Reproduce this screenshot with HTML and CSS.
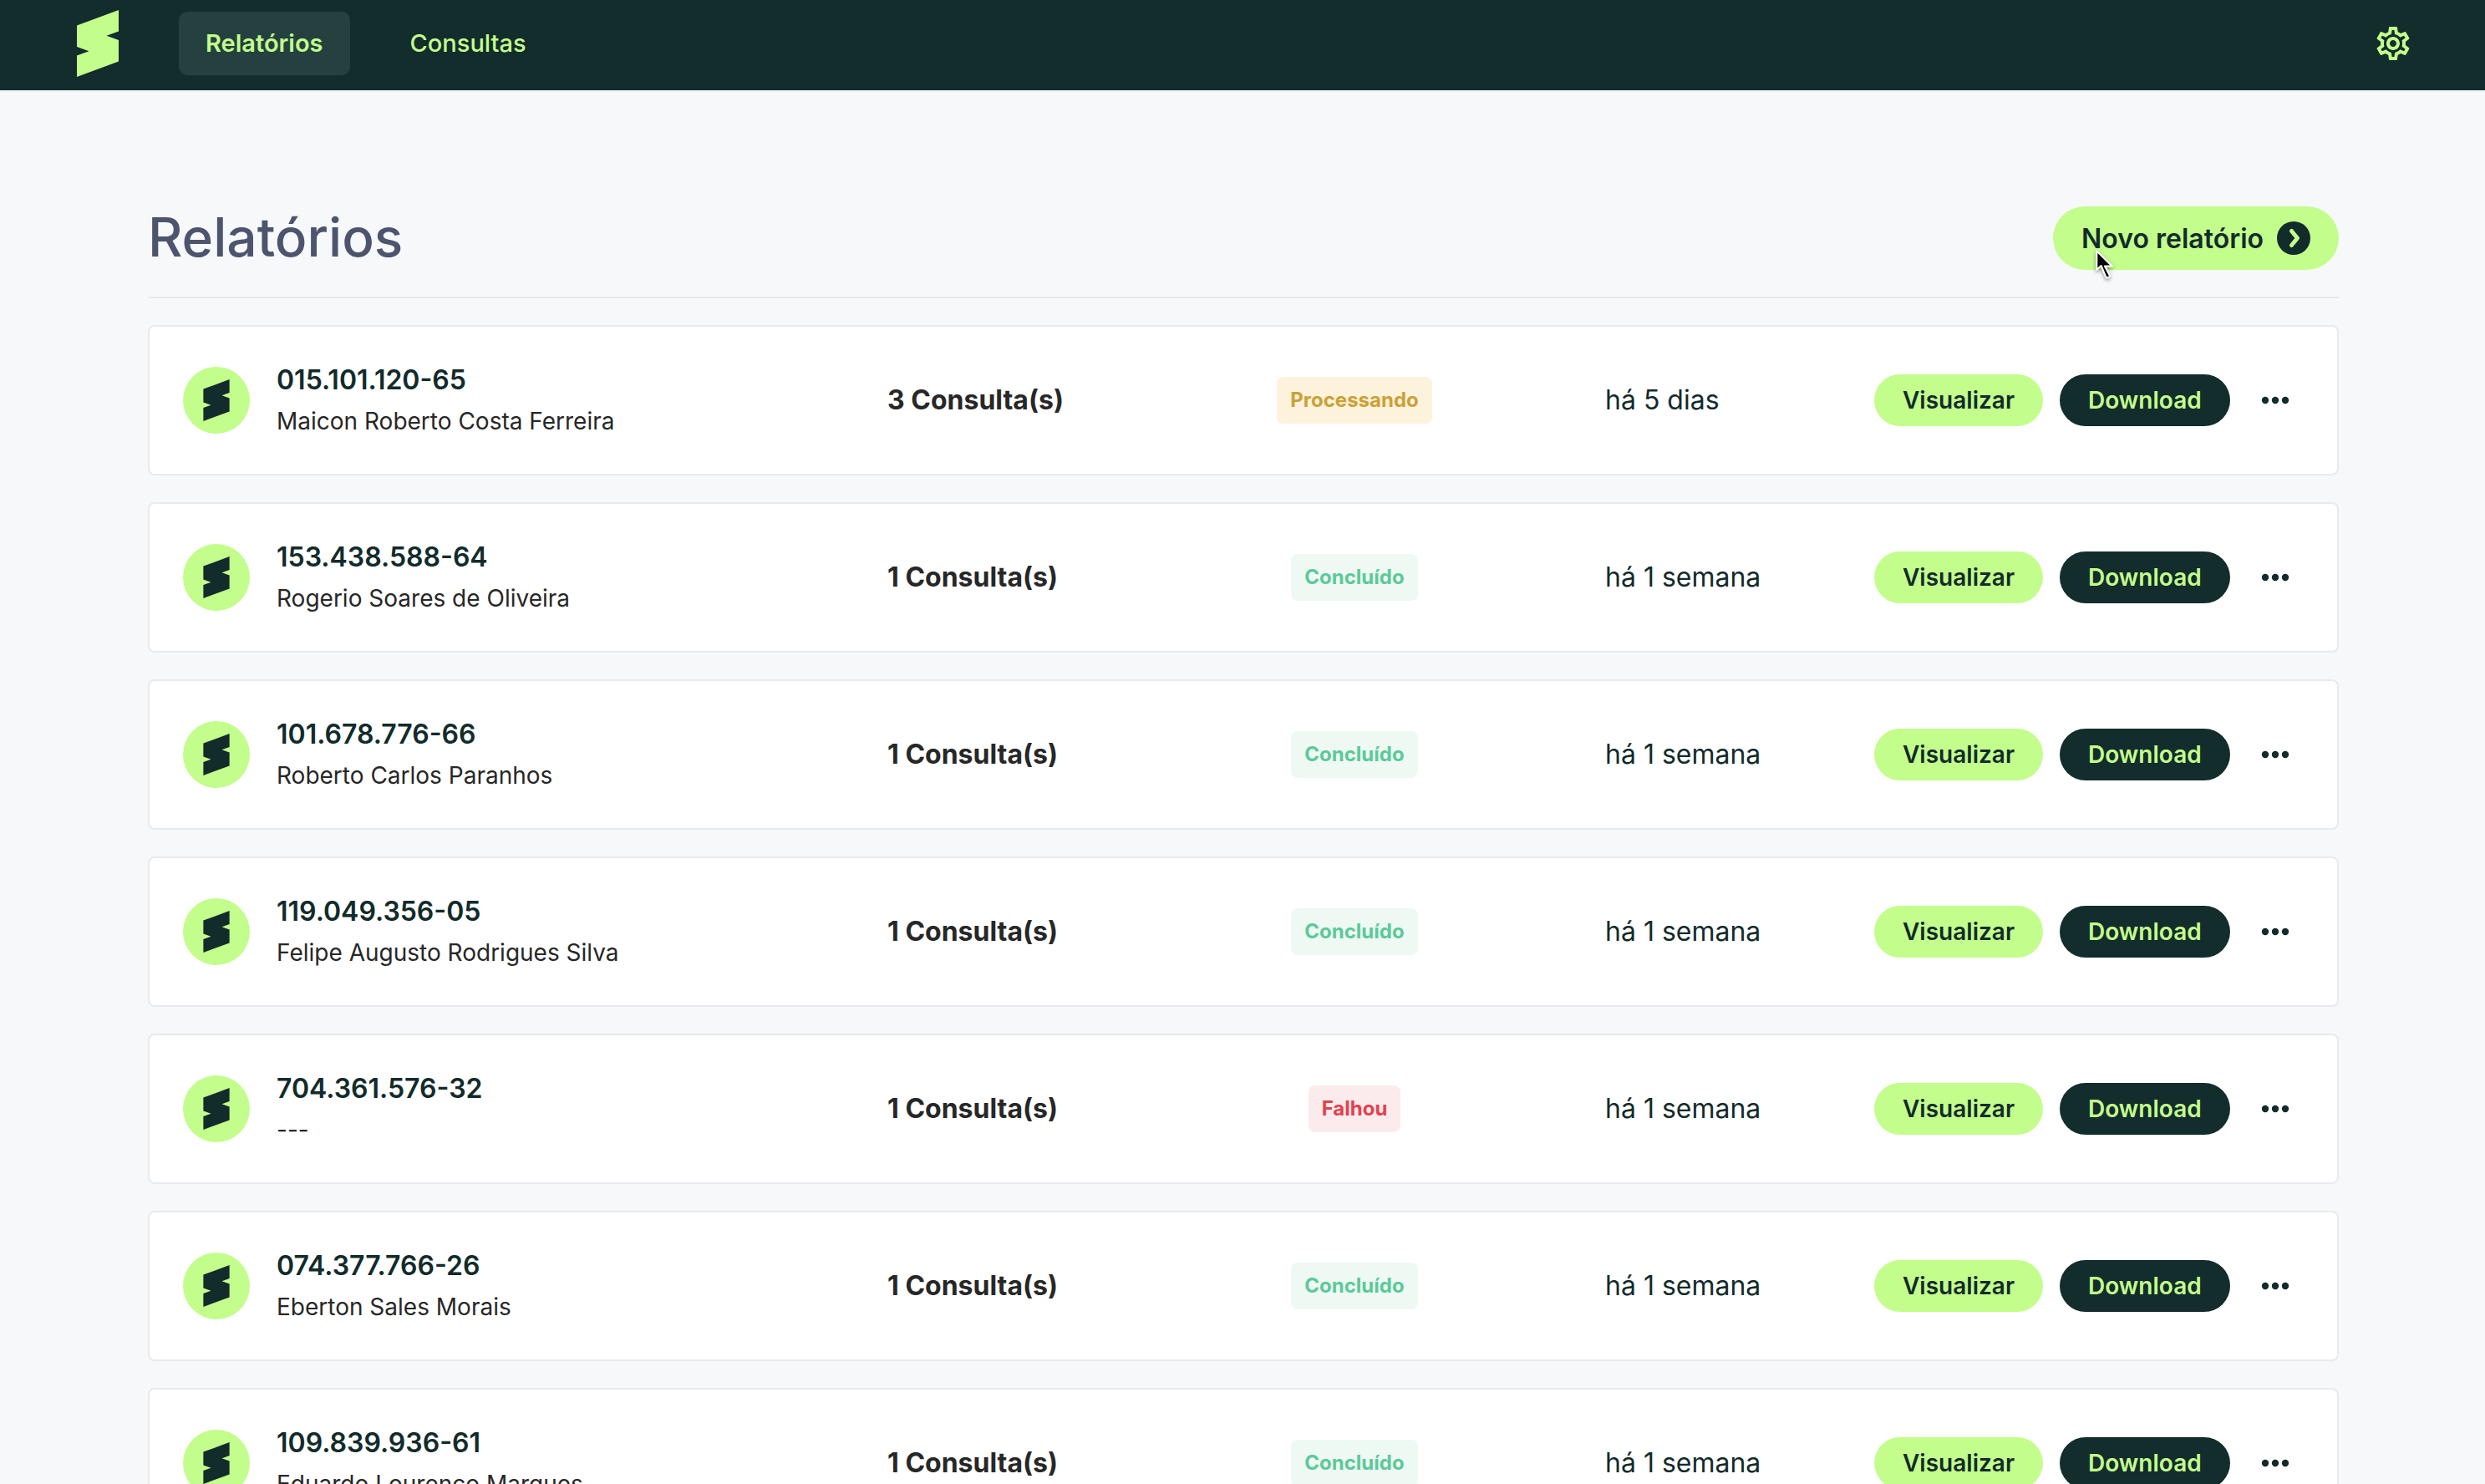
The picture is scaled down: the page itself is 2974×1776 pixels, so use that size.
FILE: index.html
```html
<!DOCTYPE html>
<html lang="pt-BR">
  <head>
    <meta charset="utf-8" />
    <title>Relatórios</title>
    <meta name="viewport" content="width=device-width, initial-scale=1" />
    <link rel="stylesheet" href="styles.css" />
  </head>
  <body>
    <svg class="sprite" aria-hidden="true">
      <symbol id="logo" viewBox="0 0 50 80">
        <path d="M50 0 0 18.5V44l14.5 5.2L0 54.5V80l50-18.5V36l-14.5-5.2L50 25.5Z" />
      </symbol>
      <symbol id="dots" viewBox="0 0 36 36">
        <circle cx="6" cy="18" r="4.2" />
        <circle cx="18" cy="18" r="4.2" />
        <circle cx="30" cy="18" r="4.2" />
      </symbol>
    </svg>

    <header class="topbar">
      <a href="#" class="logo" aria-label="Início"><svg><use href="#logo" /></svg></a>
      <nav class="menu">
        <a href="#" class="menu-link active">Relatórios</a>
        <a href="#" class="menu-link">Consultas</a>
      </nav>
      <button type="button" class="settings" aria-label="Configurações">
        <svg viewBox="0 0 24 24">
          <path d="M19.43 12.98c.04-.32.07-.64.07-.98 0-.34-.03-.66-.07-.98l2.11-1.65c.19-.15.24-.42.12-.64l-2-3.46c-.09-.16-.26-.25-.44-.25-.06 0-.12.01-.17.03l-2.49 1c-.52-.4-1.08-.73-1.69-.98l-.38-2.65C14.46 2.18 14.25 2 14 2h-4c-.25 0-.46.18-.49.42l-.38 2.65c-.61.25-1.17.59-1.69.98l-2.49-1c-.06-.02-.12-.03-.18-.03-.17 0-.34.09-.43.25l-2 3.46c-.13.22-.07.49.12.64l2.11 1.65c-.04.32-.07.65-.07.98 0 .33.03.66.07.98l-2.11 1.65c-.19.15-.24.42-.12.64l2 3.46c.09.16.26.25.44.25.06 0 .12-.01.17-.03l2.49-1c.52.4 1.08.73 1.69.98l.38 2.65c.03.24.24.42.49.42h4c.25 0 .46-.18.49-.42l.38-2.65c.61-.25 1.17-.59 1.69-.98l2.49 1c.06.02.12.03.18.03.17 0 .34-.09.43-.25l2-3.46c.12-.22.07-.49-.12-.64l-2.11-1.65zm-1.98-1.71c.04.31.05.52.05.73 0 .21-.02.43-.05.73l-.14 1.13.89.7 1.08.84-.7 1.21-1.27-.51-1.04-.42-.9.68c-.43.32-.84.56-1.25.73l-1.06.43-.16 1.13-.2 1.35h-1.4l-.19-1.35-.16-1.13-1.06-.43c-.43-.18-.83-.41-1.23-.71l-.91-.7-1.06.43-1.27.51-.7-1.21 1.08-.84.89-.7-.14-1.13c-.03-.31-.05-.54-.05-.74s.02-.43.05-.73l.14-1.13-.89-.7-1.08-.84.7-1.21 1.27.51 1.04.42.9-.68c.43-.32.84-.56 1.25-.73l1.06-.43.16-1.13.2-1.35h1.39l.19 1.35.16 1.13 1.06.43c.43.18.83.41 1.23.71l.91.7 1.06-.43 1.27-.51.7 1.21-1.07.85-.89.7.14 1.13zM12 8c-2.21 0-4 1.79-4 4s1.79 4 4 4 4-1.79 4-4-1.79-4-4-4zm0 6c-1.1 0-2-.9-2-2s.9-2 2-2 2 .9 2 2-.9 2-2 2z" />
        </svg>
      </button>
    </header>

    <main class="container">
      <div class="page-header">
        <h1>Relatórios</h1>
        <button type="button" class="btn-new">
          Novo relatório
          <svg class="btn-new-icon" viewBox="0 0 40 40">
            <circle cx="20" cy="20" r="20" />
            <path d="M17.5 11.500 24.500 20l-7 8.500" />
          </svg>
          <svg class="cursor" viewBox="0 0 22 36">
            <path d="M2 2v21l5-4.500 5 12q1 2 3 1t1-3l-5-9.500h8z" />
          </svg>
        </button>
      </div>

      <ul class="reports">
        <li class="report">
          <div class="person">
            <span class="avatar"><svg><use href="#logo" /></svg></span>
            <div>
              <strong class="cpf">015.101.120-65</strong>
              <p class="name">Maicon Roberto Costa Ferreira</p>
            </div>
          </div>
          <span class="count">3 Consulta(s)</span>
          <span class="badge processing">Processando</span>
          <span class="date">há 5 dias</span>
          <div class="actions">
            <button type="button" class="btn">Visualizar</button>
            <button type="button" class="btn dark">Download</button>
            <button type="button" class="more" aria-label="Mais opções"><svg><use href="#dots" /></svg></button>
          </div>
        </li>

        <li class="report">
          <div class="person">
            <span class="avatar"><svg><use href="#logo" /></svg></span>
            <div>
              <strong class="cpf">153.438.588-64</strong>
              <p class="name">Rogerio Soares de Oliveira</p>
            </div>
          </div>
          <span class="count">1 Consulta(s)</span>
          <span class="badge done">Concluído</span>
          <span class="date">há 1 semana</span>
          <div class="actions">
            <button type="button" class="btn">Visualizar</button>
            <button type="button" class="btn dark">Download</button>
            <button type="button" class="more" aria-label="Mais opções"><svg><use href="#dots" /></svg></button>
          </div>
        </li>

        <li class="report">
          <div class="person">
            <span class="avatar"><svg><use href="#logo" /></svg></span>
            <div>
              <strong class="cpf">101.678.776-66</strong>
              <p class="name">Roberto Carlos Paranhos</p>
            </div>
          </div>
          <span class="count">1 Consulta(s)</span>
          <span class="badge done">Concluído</span>
          <span class="date">há 1 semana</span>
          <div class="actions">
            <button type="button" class="btn">Visualizar</button>
            <button type="button" class="btn dark">Download</button>
            <button type="button" class="more" aria-label="Mais opções"><svg><use href="#dots" /></svg></button>
          </div>
        </li>

        <li class="report">
          <div class="person">
            <span class="avatar"><svg><use href="#logo" /></svg></span>
            <div>
              <strong class="cpf">119.049.356-05</strong>
              <p class="name">Felipe Augusto Rodrigues Silva</p>
            </div>
          </div>
          <span class="count">1 Consulta(s)</span>
          <span class="badge done">Concluído</span>
          <span class="date">há 1 semana</span>
          <div class="actions">
            <button type="button" class="btn">Visualizar</button>
            <button type="button" class="btn dark">Download</button>
            <button type="button" class="more" aria-label="Mais opções"><svg><use href="#dots" /></svg></button>
          </div>
        </li>

        <li class="report">
          <div class="person">
            <span class="avatar"><svg><use href="#logo" /></svg></span>
            <div>
              <strong class="cpf">704.361.576-32</strong>
              <p class="name">---</p>
            </div>
          </div>
          <span class="count">1 Consulta(s)</span>
          <span class="badge failed">Falhou</span>
          <span class="date">há 1 semana</span>
          <div class="actions">
            <button type="button" class="btn">Visualizar</button>
            <button type="button" class="btn dark">Download</button>
            <button type="button" class="more" aria-label="Mais opções"><svg><use href="#dots" /></svg></button>
          </div>
        </li>

        <li class="report">
          <div class="person">
            <span class="avatar"><svg><use href="#logo" /></svg></span>
            <div>
              <strong class="cpf">074.377.766-26</strong>
              <p class="name">Eberton Sales Morais</p>
            </div>
          </div>
          <span class="count">1 Consulta(s)</span>
          <span class="badge done">Concluído</span>
          <span class="date">há 1 semana</span>
          <div class="actions">
            <button type="button" class="btn">Visualizar</button>
            <button type="button" class="btn dark">Download</button>
            <button type="button" class="more" aria-label="Mais opções"><svg><use href="#dots" /></svg></button>
          </div>
        </li>

        <li class="report">
          <div class="person">
            <span class="avatar"><svg><use href="#logo" /></svg></span>
            <div>
              <strong class="cpf">109.839.936-61</strong>
              <p class="name">Eduardo Lourenço Marques</p>
            </div>
          </div>
          <span class="count">1 Consulta(s)</span>
          <span class="badge done">Concluído</span>
          <span class="date">há 1 semana</span>
          <div class="actions">
            <button type="button" class="btn">Visualizar</button>
            <button type="button" class="btn dark">Download</button>
            <button type="button" class="more" aria-label="Mais opções"><svg><use href="#dots" /></svg></button>
          </div>
        </li>
      </ul>
    </main>
  </body>
</html>
```
FILE: styles.css
```css
* {
  box-sizing: border-box;
  margin: 0;
  padding: 0;
}

body {
  height: 100vh;
  overflow: hidden;
  font-family: Inter, sans-serif;
  font-size: 32px;
  line-height: 48px;
  color: #122b2b;
  background-color: #f7f8fa;
}

button {
  font-family: inherit;
  color: inherit;
  border: none;
  background: none;
  cursor: pointer;
}

svg {
  display: block;
  fill: currentColor;
}

.sprite {
  position: absolute;
  width: 0;
  height: 0;
}

/* topo */
.topbar {
  display: flex;
  align-items: center;
  padding: 12px 86px 16px 92px;
  color: #c3fd8c;
  background-color: #132c2c;
  border-bottom: 2px solid #f0f0f0;
}

.logo {
  color: inherit;
}

.logo svg {
  width: 50px;
  height: 80px;
}

.menu {
  display: flex;
  gap: 40px;
  margin-left: 72px;
}

.menu-link {
  padding: 14px 32px;
  font-size: 29px;
  font-weight: 500;
  color: inherit;
  text-decoration: none;
  border-radius: 10px;
}

.menu-link.active {
  font-weight: 600;
  background-color: #24413f;
}

.settings {
  margin-left: auto;
}

.settings svg {
  width: 48px;
  height: 48px;
}

/* conteudo */
.container {
  padding: 137px 175px 0 177px;
}

.page-header {
  display: flex;
  justify-content: space-between;
  align-items: flex-start;
  padding-bottom: 32px;
  margin-bottom: 32px;
  border-bottom: 2px solid #e8eaed;
}

h1 {
  font-size: 64px;
  font-weight: 500;
  line-height: 74px;
  color: #4c556d;
}

.btn-new {
  position: relative;
  display: flex;
  align-items: center;
  gap: 16px;
  height: 76px;
  padding: 0 34px;
  font-size: 32px;
  font-weight: 600;
  background-color: #c3fd8c;
  border-radius: 38px;
}

.btn-new-icon {
  width: 40px;
  height: 40px;
}

.btn-new-icon path {
  fill: none;
  stroke: #c3fd8c;
  stroke-width: 5;
  stroke-linecap: round;
  stroke-linejoin: round;
}

.cursor {
  position: absolute;
  top: 51px;
  left: 50px;
  width: 24px;
  height: 39px;
  overflow: visible;
  fill: #000;
  stroke: #fff;
  stroke-width: 2;
  stroke-linejoin: round;
  filter: drop-shadow(0 2px 2px rgba(0, 0, 0, 0.4));
}

/* lista */
.reports {
  display: flex;
  flex-direction: column;
  gap: 32px;
  list-style: none;
}

.report {
  display: grid;
  grid-template-columns: 843fr 259fr 600fr 322fr 514fr;
  align-items: center;
  height: 180px;
  padding: 0 40px;
  background-color: #fff;
  border: 2px solid #e7eaee;
  border-radius: 8px;
}

.person {
  display: flex;
  align-items: center;
  gap: 32px;
}

.avatar {
  display: flex;
  justify-content: center;
  align-items: center;
  width: 80px;
  height: 80px;
  background-color: #c3fd8c;
  border-radius: 50%;
}

.avatar svg {
  width: 32px;
  height: 50px;
}

.cpf {
  display: block;
  font-weight: 600;
}

.name {
  margin-top: 1px;
  font-size: 28px;
  color: #272727;
}

.count {
  font-weight: 700;
  color: #272727;
}

.badge {
  justify-self: center;
  padding: 4px 16px;
  font-size: 24px;
  font-weight: 700;
  border-radius: 8px;
}

.badge.processing {
  color: #cba135;
  background-color: #fdf2dc;
}

.badge.done {
  color: #5cc998;
  background-color: #eef9f4;
}

.badge.failed {
  color: #e5404f;
  background-color: #fcebec;
}

.actions {
  display: flex;
  align-items: center;
  gap: 20px;
}

.btn {
  height: 62px;
  padding: 0 34px;
  font-size: 28px;
  font-weight: 600;
  background-color: #c3fd8c;
  border-radius: 31px;
}

.btn.dark {
  color: #c3fd8c;
  background-color: #132c2c;
}

.more {
  padding: 0 16px;
}

.more svg {
  width: 36px;
  height: 36px;
}
```
